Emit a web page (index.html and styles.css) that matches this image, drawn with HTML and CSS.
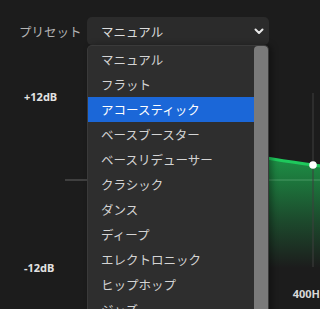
FILE: index.html
```html
<!DOCTYPE html>
<html lang="ja">
<head>
<meta charset="utf-8">
<link rel="stylesheet" href="styles.css">
</head>
<body>
<div class="app">
  <div class="preset-row">
    <span class="preset-label">プリセット</span>
    <div class="select-wrap">
      <div class="select">
        <span class="select-value">マニュアル</span>
        <svg class="chevron" width="10" height="7" viewBox="0 0 10 7"><polyline points="1.5,1.5 5,5 8.5,1.5" fill="none" stroke="#e8e8e8" stroke-width="2" stroke-linecap="round" stroke-linejoin="round"/></svg>
      </div>
      <div class="dropdown">
        <ul class="options">
          <li>マニュアル</li>
          <li>フラット</li>
          <li class="active">アコースティック</li>
          <li>ベースブースター</li>
          <li>ベースリデューサー</li>
          <li>クラシック</li>
          <li>ダンス</li>
          <li>ディープ</li>
          <li>エレクトロニック</li>
          <li>ヒップホップ</li>
          <li>ジャズ</li>
          <li>ラテン</li>
        </ul>
        <div class="scrollbar"><div class="thumb"></div></div>
      </div>
    </div>
  </div>
  <div class="chart">
    <div class="axis">
      <span>+12dB</span>
      <span>-12dB</span>
    </div>
    <svg class="plot" width="255" height="225" viewBox="0 0 255 225">
      <defs>
        <linearGradient id="fillGrad" gradientUnits="userSpaceOnUse" x1="0" y1="70" x2="0" y2="178">
          <stop offset="0" stop-color="#1db954" stop-opacity="0.72"/>
          <stop offset="0.55" stop-color="#1db954" stop-opacity="0.3"/>
          <stop offset="1" stop-color="#1db954" stop-opacity="0"/>
        </linearGradient>
      </defs>
      <line x1="0" y1="90" x2="255" y2="90" stroke="#4a4a4a" stroke-width="1"/>
      <path d="M35,40 C120,52 180,66 248,75 L256,76 L256,178 L35,178 Z" fill="url(#fillGrad)"/>
      <line x1="0" y1="90" x2="255" y2="90" stroke="#ffffff" stroke-opacity="0.12" stroke-width="1"/>
      <line x1="248" y1="3" x2="248" y2="177" stroke="#3e3e3e" stroke-width="1"/>
      <path d="M35,40 C120,52 180,66 248,75 L256,76" fill="none" stroke="#1ec95c" stroke-width="3"/>
      <circle cx="248" cy="75" r="3.8" fill="#ffffff"/>
      <text class="freq" x="244" y="208" text-anchor="middle">400Hz</text>
    </svg>
  </div>
</div>
</body>
</html>
```
FILE: styles.css
```css
html, body {
  margin: 0;
  padding: 0;
}
body {
  width: 320px;
  height: 309px;
  overflow: hidden;
  background: #1c1c1c;
  font-family: "Noto Sans CJK JP", "Noto Sans", sans-serif;
}
.app {
  display: flex;
  flex-direction: column;
}
.preset-row {
  display: flex;
  align-items: center;
  padding: 17px 0 0 19px;
  position: relative;
  z-index: 2;
}
.preset-label {
  width: 68px;
  font-size: 12.5px;
  color: #b4b4b4;
}
.select-wrap {
  position: relative;
}
.select {
  width: 182px;
  height: 28px;
  box-sizing: border-box;
  background: #2b2b2b;
  border-radius: 5px;
  display: flex;
  align-items: center;
  justify-content: space-between;
  padding: 0 5px 0 14px;
}
.select-value {
  font-size: 12.5px;
  color: #dcdcdc;
}
.chevron {
  display: block;
}
.dropdown {
  position: absolute;
  top: 28px;
  left: 0;
  width: 182px;
  height: 290px;
  box-sizing: border-box;
  background: #2e2e2e;
  border: 1px solid #3a3a3a;
  border-bottom: none;
  border-radius: 5px 5px 0 0;
  display: flex;
  box-shadow: 3px 0 6px rgba(0,0,0,0.35);
}
.options {
  flex: 1;
  list-style: none;
  margin: 0;
  padding: 1px 0 0 0;
  overflow: hidden;
}
.options li {
  height: 25px;
  line-height: 25px;
  padding-left: 13px;
  font-size: 12.5px;
  color: #d4d4d4;
  white-space: nowrap;
}
.options li.active {
  background: #1b67d8;
  color: #ffffff;
}
.scrollbar {
  width: 14px;
  display: flex;
}
.thumb {
  flex: 1;
  background: #7a7a7a;
  border-radius: 4px 4px 0 0;
}
.chart {
  display: flex;
  margin-top: 45px;
  position: relative;
  z-index: 1;
}
.axis {
  width: 65px;
  height: 185px;
  box-sizing: border-box;
  padding-left: 24px;
  display: flex;
  flex-direction: column;
  justify-content: space-between;
  font-family: "Noto Sans", sans-serif;
  font-weight: 700;
  font-size: 11px;
  line-height: 14px;
  color: #e2e2e2;
}
.plot {
  display: block;
  flex: none;
}
.freq {
  font-family: "Noto Sans", sans-serif;
  font-weight: 700;
  font-size: 11px;
  fill: #d8d8d8;
}
```
